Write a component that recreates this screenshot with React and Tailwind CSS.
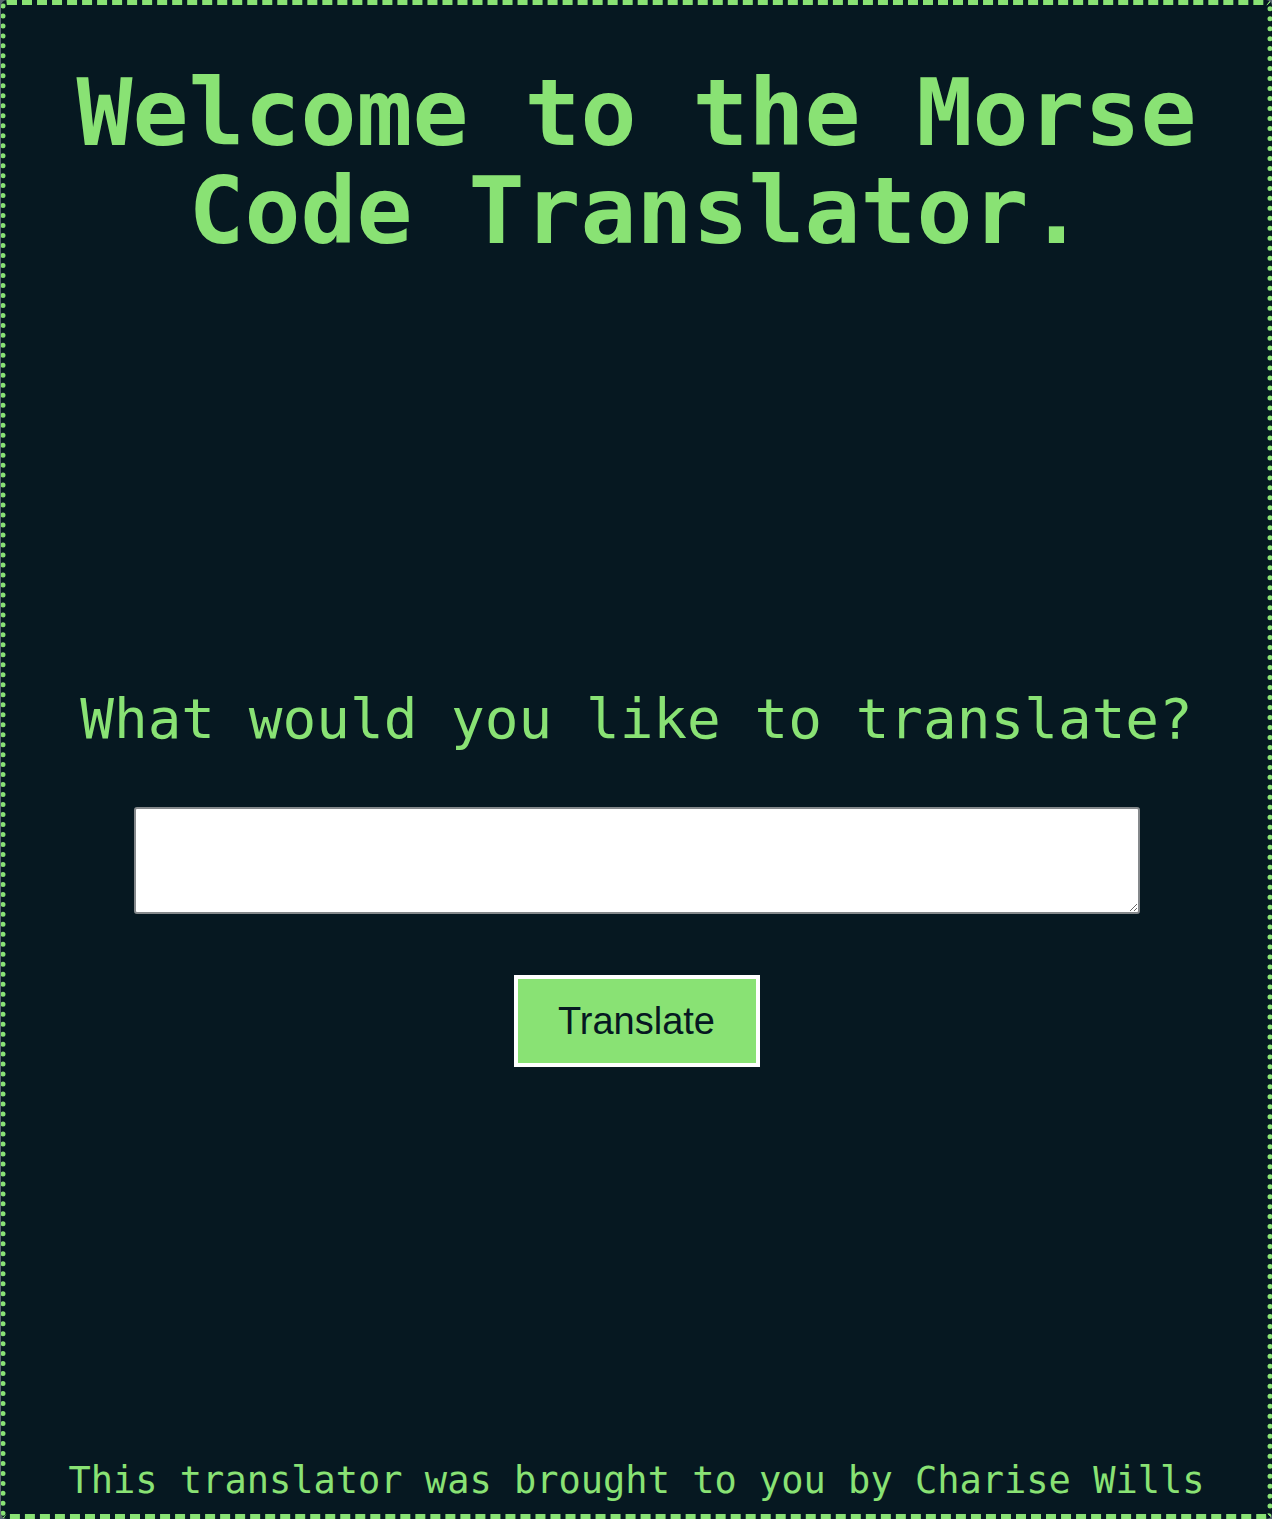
export default function App() {
  return (
    <div className="bg-[#5a6870] pl-[1px] w-full">
      <div
        className="h-[1519px] bg-[#061821] border-[5px] border-[#89e274] rounded-[6px] flex flex-col items-center text-[#89e274] [border-style:dashed_dotted]"
        style={{ fontFamily: '"DejaVu Sans Mono", monospace' }}
      >
        <h1 className="mt-[59px] text-center font-bold text-[93px] leading-[98px] w-full px-4">
          Welcome to the Morse
          <br />
          Code Translator.
        </h1>
        <h2 className="mt-[427px] text-center text-[56px] leading-[64px]">
          What would you like to translate?
        </h2>
        <textarea
          className="mt-[56px] w-[1006px] h-[107px] bg-white border-[2px] border-[#85898c] rounded-[3px] text-black"
          aria-label="Text to translate"
        />
        <button
          className="mt-[61px] w-[246px] h-[92px] bg-[#89e274] border-[4px] border-white flex items-center justify-center text-[38px] text-[#061821]"
          style={{ fontFamily: '"Liberation Sans", Arial, sans-serif' }}
        >
          Translate
        </button>
        <div className="flex-1" />
        <footer className="mb-[11px] text-center text-[37px] leading-[44px]">
          This translator was brought to you by Charise Wills
        </footer>
      </div>
    </div>
  );
}
